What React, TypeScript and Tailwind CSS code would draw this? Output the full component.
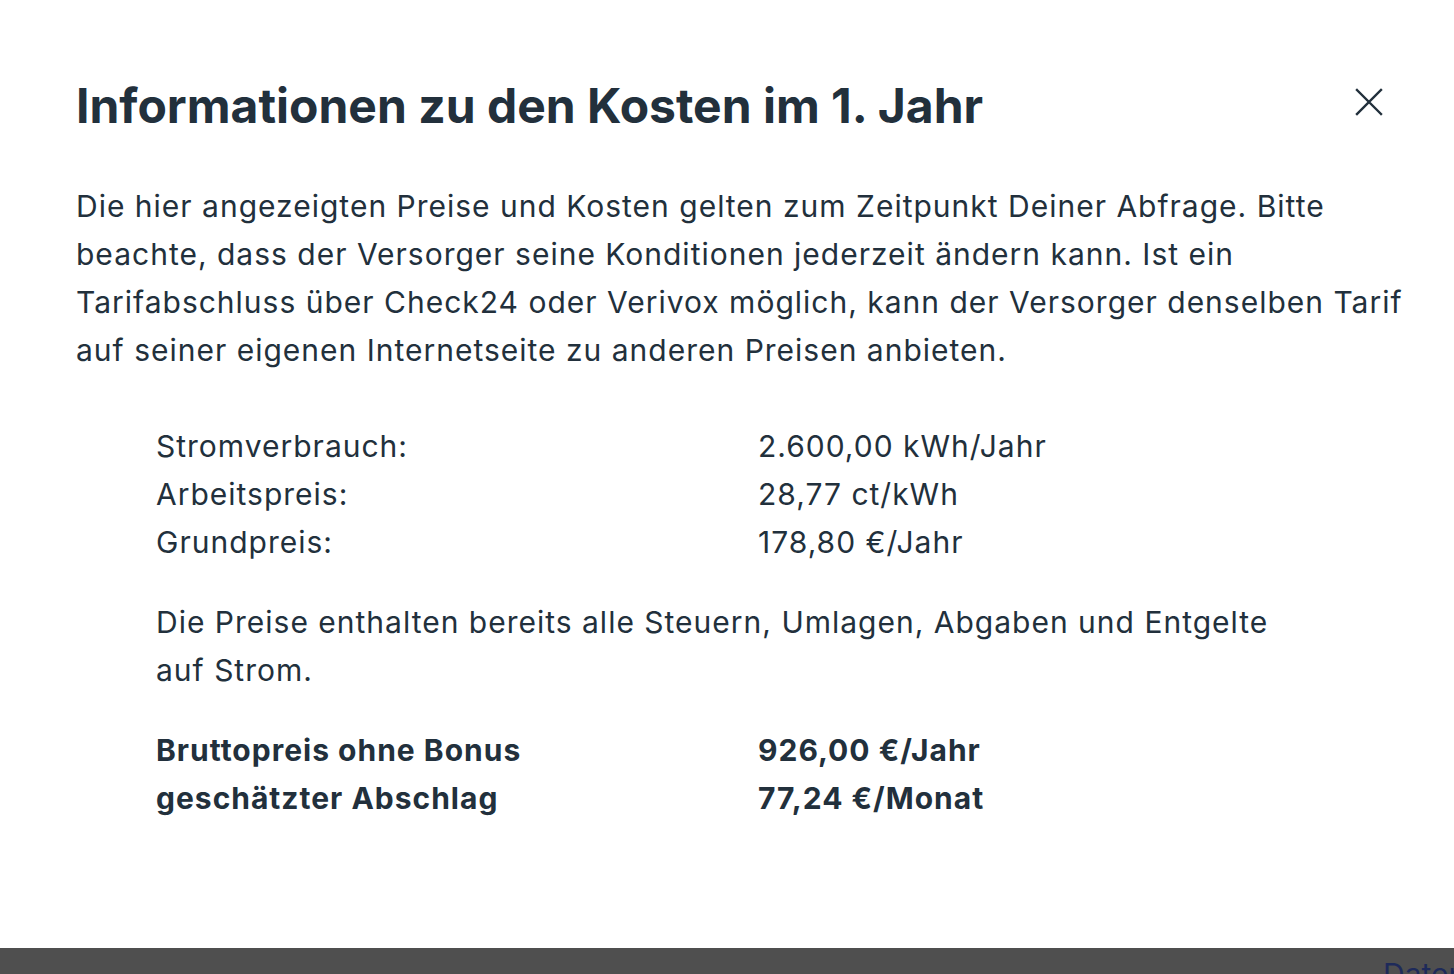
import React from "react";

const rows = [
  { label: "Stromverbrauch:", value: "2.600,00 kWh/Jahr" },
  { label: "Arbeitspreis:", value: "28,77 ct/kWh" },
  { label: "Grundpreis:", value: "178,80 €/Jahr" },
];

const totals = [
  { label: "Bruttopreis ohne Bonus", value: "926,00 €/Jahr" },
  { label: "geschätzter Abschlag", value: "77,24 €/Monat" },
];

function CloseIcon() {
  return (
    <svg width="28" height="28" viewBox="0 0 28 28" fill="none" stroke="currentColor" strokeWidth="2.4" strokeLinecap="square">
      <path d="M2 2 L26 26 M26 2 L2 26" />
    </svg>
  );
}

export default function App() {
  return (
    <div className="flex h-[974px] flex-col overflow-hidden bg-white font-['Inter','Noto_Sans',sans-serif] text-[#22303c]">
      <div className="flex-1 pl-[76px] pr-[40px]">
        <div className="flex items-start justify-between pt-[76px]">
          <h1 className="text-[48px] font-bold leading-[60px]">Informationen zu den Kosten im 1. Jahr</h1>
          <button className="mr-[31px] mt-[12px] text-[#22303c]" aria-label="Schließen">
            <CloseIcon />
          </button>
        </div>

        <p className="mt-[46px] text-[30px] leading-[48px] tracking-[1px]">
          Die hier angezeigten Preise und Kosten gelten zum Zeitpunkt Deiner Abfrage. Bitte beachte, dass der Versorger
          seine Konditionen jederzeit ändern kann. Ist ein Tarifabschluss über Check24 oder Verivox möglich, kann der
          Versorger denselben Tarif auf seiner eigenen Internetseite zu anderen Preisen anbieten.
        </p>

        <div className="ml-[80px] mr-[120px] mt-[48px] text-[30px] leading-[48px] tracking-[1px]">
          <div className="grid grid-cols-[602px_1fr]">
            {rows.map((row) => (
              <React.Fragment key={row.label}>
                <span>{row.label}</span>
                <span>{row.value}</span>
              </React.Fragment>
            ))}
          </div>

          <p className="mt-[32px]">
            Die Preise enthalten bereits alle Steuern, Umlagen, Abgaben und Entgelte auf Strom.
          </p>

          <div className="mt-[32px] grid grid-cols-[602px_1fr] font-bold">
            {totals.map((row) => (
              <React.Fragment key={row.label}>
                <span>{row.label}</span>
                <span>{row.value}</span>
              </React.Fragment>
            ))}
          </div>
        </div>
      </div>

      <div className="relative h-[26px] shrink-0 overflow-hidden bg-[#4f4f4f]">
        <span className="absolute left-[1383px] top-[10px] text-[30px] leading-[32px] text-[#1e2a5a]">Datenschutz</span>
      </div>
    </div>
  );
}
